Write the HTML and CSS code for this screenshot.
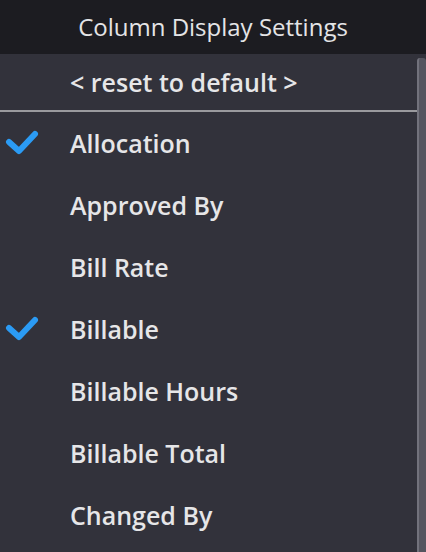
FILE: index.html
```html
<!DOCTYPE html>
<html>
<head>
<meta charset="utf-8">
<link rel="stylesheet" href="styles.css">
</head>
<body>
<div class="panel">
  <div class="header">Column Display Settings</div>
  <div class="body">
    <div class="list">
      <div class="reset">&lt; reset to default &gt;</div>
      <div class="item"><span class="check"><svg width="34" height="26" viewBox="0 0 34 26"><path d="M4 12 L14 21 L30 4" fill="none" stroke="#2b9bf4" stroke-width="6" stroke-linecap="round" stroke-linejoin="round"/></svg></span><span class="label">Allocation</span></div>
      <div class="item"><span class="check"></span><span class="label">Approved By</span></div>
      <div class="item"><span class="check"></span><span class="label">Bill Rate</span></div>
      <div class="item"><span class="check"><svg width="34" height="26" viewBox="0 0 34 26"><path d="M4 12 L14 21 L30 4" fill="none" stroke="#2b9bf4" stroke-width="6" stroke-linecap="round" stroke-linejoin="round"/></svg></span><span class="label">Billable</span></div>
      <div class="item"><span class="check"></span><span class="label">Billable Hours</span></div>
      <div class="item"><span class="check"></span><span class="label">Billable Total</span></div>
      <div class="item"><span class="check"></span><span class="label">Changed By</span></div>
    </div>
    <div class="scrollbar"></div>
  </div>
</div>
</body>
</html>
```
FILE: styles.css
```css
html, body {
  margin: 0;
  padding: 0;
  background: #32323b;
  font-family: "Open Sans", "Noto Sans", sans-serif;
  color: #e6e6e8;
}
.panel {
  width: 426px;
  height: 552px;
  display: flex;
  flex-direction: column;
  overflow: hidden;
}
.header {
  height: 54px;
  flex: none;
  background: #1c1c21;
  display: flex;
  align-items: center;
  justify-content: center;
  font-size: 24px;
  font-weight: 400;
  color: #e4e4e6;
  padding-bottom: 1px;
  box-sizing: border-box;
}
.body {
  flex: 1;
  display: flex;
  background: #32323b;
}
.list {
  flex: 1;
  display: flex;
  flex-direction: column;
}
.reset {
  height: 58px;
  flex: none;
  border-bottom: 2px solid #9a9a9e;
  box-sizing: border-box;
  padding-left: 70px;
  display: flex;
  align-items: center;
  font-size: 25px;
  font-weight: 600;
}
.item {
  height: 62px;
  flex: none;
  display: flex;
  align-items: center;
  font-size: 25px;
  font-weight: 600;
}
.check {
  width: 70px;
  flex: none;
  display: flex;
  align-items: center;
  padding-left: 5px;
  box-sizing: border-box;
}
.check svg { display: block; }
.scrollbar {
  width: 9px;
  flex: none;
  margin-top: 4px;
  background: #55555f;
  border-left: 2px solid #72727c;
  border-radius: 3px 3px 0 0;
  box-sizing: border-box;
}
```
